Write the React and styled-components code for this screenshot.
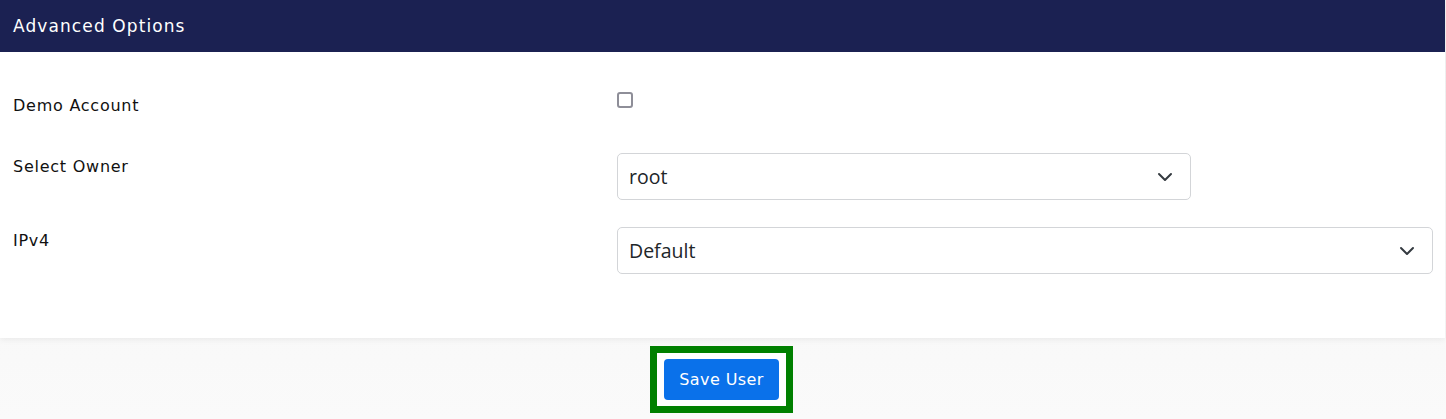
import React from "react";
import styled, { createGlobalStyle } from "styled-components";

const Global = createGlobalStyle`
  html, body { margin: 0; padding: 0; }
  body {
    background: #f6f6f6;
    font-family: "DejaVu Sans", "Noto Sans", sans-serif;
    color: #111;
  }
`;

const Page = styled.div`
  width: 1446px;
  min-height: 419px;
  background: linear-gradient(#f3f3f3, #fafafa);
`;

const Card = styled.section`
  width: 1445px;
  background: #fff;
  box-shadow: 0 2px 6px rgba(0, 0, 0, 0.06);
`;

const Header = styled.header`
  height: 52px;
  background: #1b2152;
  color: #fff;
  display: flex;
  align-items: center;
  padding: 0 13px;
  font-size: 17px;
  letter-spacing: 1.1px;
`;

const Body = styled.div`
  padding: 40px 13px 64px 13px;
  display: flex;
  flex-direction: column;
`;

const Row = styled.div`
  display: grid;
  grid-template-columns: 604px 1fr;
  align-items: start;
  margin-bottom: ${(p) => p.$gap}px;
`;

const Label = styled.label`
  font-size: 16px;
  line-height: 24px;
  margin-top: 2px;
  letter-spacing: 0.75px;
`;

const Check = styled.input.attrs({ type: "checkbox" })`
  appearance: none;
  margin: 0;
  width: 16px;
  height: 16px;
  box-sizing: border-box;
  border: 2px solid #8e8e98;
  border-radius: 3px;
  background: #fff;
`;

const SelectBox = styled.div`
  width: ${(p) => p.$w};
  height: 47px;
  box-sizing: border-box;
  border: 1px solid #d3d5d8;
  border-radius: 5px;
  display: flex;
  align-items: center;
  padding: 0 12px 0 11px;
  font-family: "Open Sans", "Noto Sans", sans-serif;
  font-size: 19.5px;
  color: #212529;
`;

const Value = styled.span`
  flex: 1;
`;

const ChevronIcon = styled.svg`
  margin-right: 5px;
  flex: none;
`;

const Chevron = () => (
  <ChevronIcon width="16" height="16" viewBox="0 0 16 16">
    <path d="M2 5l6 6 6-6" fill="none" stroke="#343a40" strokeWidth="2" strokeLinecap="round" strokeLinejoin="round" />
  </ChevronIcon>
);

const Footer = styled.div`
  display: flex;
  justify-content: center;
  padding-top: 8px;
`;

const Highlight = styled.div`
  border: 7px solid #008000;
  padding: 6px 7px;
  background: #fff;
  margin-left: -3px;
`;

const Button = styled.button`
  width: 115px;
  height: 41px;
  border: none;
  border-radius: 4px;
  background: #0a71ea;
  color: #fff;
  font-family: "DejaVu Sans", "Noto Sans", sans-serif;
  font-size: 16px;
  letter-spacing: 0.4px;
`;

export default function App() {
  return (
    <Page>
      <Global />
      <Card>
        <Header>Advanced Options</Header>
        <Body>
          <Row $gap={35}>
            <Label>Demo Account</Label>
            <div><Check /></div>
          </Row>
          <Row $gap={27}>
            <Label>Select Owner</Label>
            <SelectBox $w="574px">
              <Value>root</Value>
              <Chevron />
            </SelectBox>
          </Row>
          <Row $gap={0}>
            <Label>IPv4</Label>
            <SelectBox $w="816px">
              <Value>Default</Value>
              <Chevron />
            </SelectBox>
          </Row>
        </Body>
      </Card>
      <Footer>
        <Highlight>
          <Button>Save User</Button>
        </Highlight>
      </Footer>
    </Page>
  );
}
